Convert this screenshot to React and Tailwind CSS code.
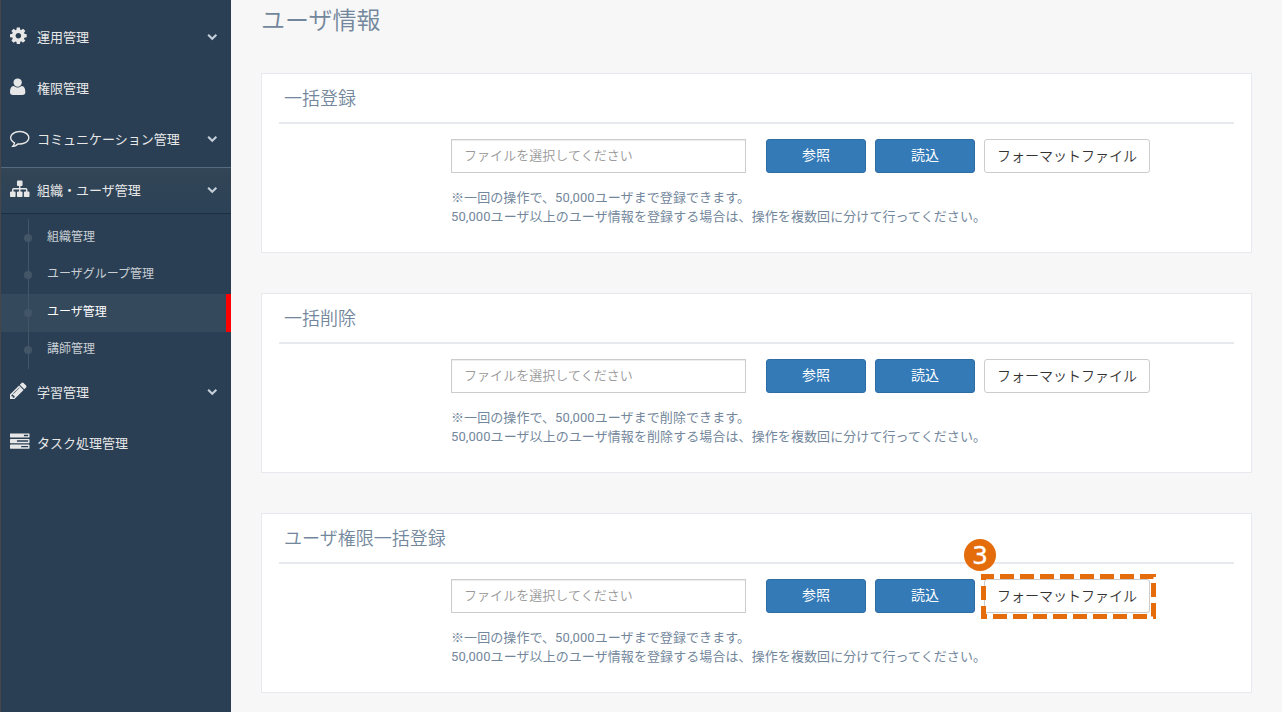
import { clsx } from "clsx";

const ICONS = {
  cog: {
    x: 128,
    d: "M1152 896q0-106-75-181t-181-75-181 75-75 181 75 181 181 75 181-75 75-181zm512-109v222q0 12-8 23t-20 13l-185 28q-19 54-39 91 35 50 107 138 10 12 10 25t-9 23q-27 37-99 108t-94 71q-12 0-26-9l-138-108q-44 23-91 38-16 136-29 186-7 28-36 28h-222q-14 0-24.5-8.5t-11.5-21.5l-28-184q-49-16-90-37l-141 107q-10 9-25 9-14 0-25-11-126-114-165-168-7-10-7-23 0-12 8-23 15-21 51-66.5t54-70.5q-27-50-41-99l-183-27q-13-2-21-12.5t-8-23.5v-222q0-12 8-23t19-13l186-28q14-46 39-92-40-57-107-138-10-12-10-24 0-10 9-23 26-36 98.5-107.5t94.5-71.5q13 0 26 10l138 107q44-23 91-38 16-136 29-186 7-28 36-28h222q14 0 24.5 8.5t11.5 21.5l28 184q49 16 90 37l142-107q9-9 24-9 13 0 25 10 129 119 165 170 7 8 7 22 0 12-8 23-15 21-51 66.5t-54 70.5q26 50 41 98l183 28q13 2 21 12.5t8 23.5z",
  },
  user: {
    x: 0,
    flip: true,
    d: "M1408 131q0-120-73-189.5t-194-69.5h-874q-121 0-194 69.5t-73 189.5q0 53 3.5 103.5t14 109t26.5 108.5t43 97.5t62 81t85.5 53.5t111.5 20q9 0 42-21.5t74.5-48t108-48t133.5-21.5t133.5 21.5t108 48t74.5 48t42 21.5q61 0 111.5-20t85.5-53.5t62-81t43-97.5t26.5-108.5t14-109t3.5-103.5zM1088 1024q0-159-112.5-271.5t-271.5-112.5t-271.5 112.5t-112.5 271.5t112.5 271.5t271.5 112.5t271.5-112.5t112.5-271.5z",
  },
  comment: {
    x: 0,
    d: "M896 384q-204 0-381.5 69.5t-282 187.5-104.5 255q0 112 71.5 213.5t201.5 175.5l87 50-27 96q-24 91-70 172 152-63 275-171l43-38 57 6q69 8 130 8 204 0 381.5-69.5t282-187.5 104.5-255-104.5-255-282-187.5-381.5-69.5zm896 512q0 174-120 321.5t-326 233-450 85.5q-70 0-145-8-198 175-460 242-49 14-114 22h-5q-15 0-27-10.5t-16-27.5v-1q-3-4-.5-12t2-10 4.5-9.5l6-9 7-8.5 8-9q7-8 31-34.5t34.5-38 31-39.5 32.5-51 27-59 26-76q-157-89-247.5-220t-90.5-281q0-130 71-248.5t191-204.5 286-136.5 348-50.5 348 50.5 286 136.5 191 204.5 71 248.5z",
  },
  sitemap: {
    x: 0,
    d: "M1792 1248v320q0 40-28 68t-68 28h-320q-40 0-68-28t-28-68v-320q0-40 28-68t68-28h96v-192h-512v192h96q40 0 68 28t28 68v320q0 40-28 68t-68 28h-320q-40 0-68-28t-28-68v-320q0-40 28-68t68-28h96v-192h-512v192h96q40 0 68 28t28 68v320q0 40-28 68t-68 28h-320q-40 0-68-28t-28-68v-320q0-40 28-68t68-28h96v-192q0-52 38-90t90-38h512v-192h-96q-40 0-68-28t-28-68v-320q0-40 28-68t68-28h320q40 0 68 28t28 68v320q0 40-28 68t-68 28h-96v192h512q52 0 90 38t38 90v192h96q40 0 68 28t28 68z",
  },
  pencil: {
    x: 128,
    d: "M491 1536l91-91-235-235-91 91v107h128v128h107zm523-928q0-22-22-22-10 0-17 7l-542 542q-7 7-7 17 0 22 22 22 10 0 17-7l542-542q7-7 7-17zm-54-192l416 416-832 832h-416v-416zm683 96q0 53-37 90l-166 166-416-416 166-165q36-38 90-38 53 0 91 38l235 234q37 39 37 91z",
  },
  tasks: {
    x: 0,
    d: "M1024 1408h640v-128h-640v128zm-384-512h1024v-128h-1024v128zm640-512h384v-128h-384v128zm512 832v256q0 26-19 45t-45 19h-1664q-26 0-45-19t-19-45v-256q0-26 19-45t45-19h1664q26 0 45 19t19 45zm0-512v256q0 26-19 45t-45 19h-1664q-26 0-45-19t-19-45v-256q0-26 19-45t45-19h1664q26 0 45 19t19 45zm0-512v256q0 26-19 45t-45 19h-1664q-26 0-45-19t-19-45v-256q0-26 19-45t45-19h1664q26 0 45 19t19 45z",
  },
  chevron: {
    x: 0,
    d: "M1683 808l-742 741q-19 19-45 19t-45-19l-742-741q-19-19-19-45.5t19-45.5l166-165q19-19 45-19t45 19l531 531 531-531q19-19 45-19t45 19l166 165q19 19 19 45.5t-19 45.5z",
  },
};

const MENU = [
  { icon: "cog", label: "運用管理", open: true },
  { icon: "user", label: "権限管理" },
  { icon: "comment", label: "コミュニケーション管理", open: true },
  {
    icon: "sitemap",
    label: "組織・ユーザ管理",
    open: true,
    children: ["組織管理", "ユーザグループ管理", "ユーザ管理", "講師管理"],
  },
  { icon: "pencil", label: "学習管理", open: true },
  { icon: "tasks", label: "タスク処理管理" },
];

const PANELS = [
  { title: "一括登録", verb: "登録" },
  { title: "一括削除", verb: "削除" },
  { title: "ユーザ権限一括登録", verb: "登録", marked: true },
];

function Icon({ name, className }) {
  const { x, d, flip } = ICONS[name];
  return (
    <svg viewBox={`${x} 0 1792 1792`} fill="currentColor" className={className}>
      <path d={d} transform={flip ? "translate(0 1536) scale(1 -1)" : undefined} />
    </svg>
  );
}

/** Child links of the open menu entry, strung on a vertical line. */
function SubMenu({ items, current }) {
  return (
    <ul className="relative mt-[6px]">
      {items.map((label) => (
        <li
          key={label}
          className={clsx(
            "flex h-[37.5px] items-center pl-[23px] text-[12px]",
            label === current
              ? "border-r-[5px] border-[#ff0000] bg-[#35495d] text-white"
              : "text-white/75"
          )}
        >
          <span className="mr-[15px] size-2 rounded-full bg-[#425668]" />
          <span className="pb-[2px]">{label}</span>
        </li>
      ))}
      <li className="absolute inset-y-0 left-[27px] w-px bg-[#425668]" />
    </ul>
  );
}

function Sidebar() {
  return (
    <nav className="w-[231px] shrink-0 border-l border-[#45474a] bg-[#2a3f54] pt-[14px] font-normal">
      {MENU.map(({ icon, label, open, children }) => (
        <div key={label} className={children ? "" : "mb-[5px]"}>
          <div
            className={clsx(
              "flex h-[46px] items-center pr-[14px] pl-[9px] text-[13px] text-[#e7e7e7]",
              children &&
                "bg-linear-to-b from-[#334556] to-[#2c4257] shadow-[inset_0_1px_0_#566b7e,0_1px_0_#1b2d40]"
            )}
          >
            <Icon name={icon} className="mr-[7.5px] mb-[3px] h-[19.5px] w-[19.5px]" />
            <span className="grow pt-px">{label}</span>
            {open && <Icon name="chevron" className="mb-[2px] size-[10.5px] text-[#c4cfda]" />}
          </div>
          {children && <SubMenu items={children} current="ユーザ管理" />}
        </div>
      ))}
    </nav>
  );
}

/** Numbered dashed frame around the format file button. */
function Callout() {
  return (
    <>
      <svg
        width="175"
        height="45"
        className="pointer-events-none absolute -top-[5px] -left-[3px] max-w-none"
      >
        <path
          d="M2.5 2.5H172.5V42.5H2.5Z"
          fill="none"
          stroke="#e46c0a"
          strokeWidth="5"
          strokeDasharray="14 6"
          strokeDashoffset="3.5"
        />
      </svg>
      <span className="absolute -top-[40px] -left-[20px] flex size-8 items-center justify-center rounded-full bg-[#e46c0a] font-['DejaVu_Sans',sans-serif] text-[25px] leading-none font-normal text-white [-webkit-text-stroke:0.3px_white]">
        3
      </span>
    </>
  );
}

function Button({ children }) {
  return (
    <button className="h-[34px] w-[100px] rounded-[3px] border border-[#2e6da4] bg-[#337ab7] pb-px text-[14px] font-normal text-white">
      {children}
    </button>
  );
}

function Panel({ title, verb, marked }) {
  return (
    <section className="h-[180px] border border-[#e6e9ed] bg-white px-[17px]">
      <h2 className="flex h-[50px] items-center border-b-2 border-[#e6e9ed] pl-[5px] text-[18px]">
        {title}
      </h2>
      <div className="pt-[15px] pl-[172px]">
        <div className="flex">
          <input
            placeholder="ファイルを選択してください"
            className="mr-5 h-[34px] w-[295px] border border-[#ccc] px-[12px] pb-[2px] text-[13px] tracking-[0.05px] shadow-[inset_0_1px_1px_rgba(0,0,0,0.075)] placeholder:text-[#999]"
          />
          <div className="flex gap-[9px]">
            <Button>参照</Button>
            <Button>読込</Button>
            <div className="relative">
              <button className="h-[34px] w-[166px] rounded-[3px] border border-[#ccc] bg-white text-[14px] text-[#333]">
                フォーマットファイル
              </button>
              {marked && <Callout />}
            </div>
          </div>
        </div>
        <p className="mt-[15px] text-[13px] leading-[19px] font-normal tracking-[0.08px]">
          ※一回の操作で、50,000ユーザまで{verb}できます。
          <br />
          50,000ユーザ以上のユーザ情報を{verb}する場合は、操作を複数回に分けて行ってください。
        </p>
      </div>
    </section>
  );
}

export default function App() {
  return (
    <div className="flex h-[712px] w-[1282px] overflow-hidden bg-[#f7f7f7] font-['Roboto','Noto_Sans_CJK_JP',sans-serif] font-[350] text-[#73879c]">
      <Sidebar />
      <main className="grow pr-[30px] pl-[30px]">
        <h1 className="flex h-[73px] items-start pt-[3px] text-[24px] leading-[36px]">
          ユーザ情報
        </h1>
        <div className="flex flex-col gap-10">
          {PANELS.map((panel) => (
            <Panel key={panel.title} {...panel} />
          ))}
        </div>
      </main>
    </div>
  );
}
